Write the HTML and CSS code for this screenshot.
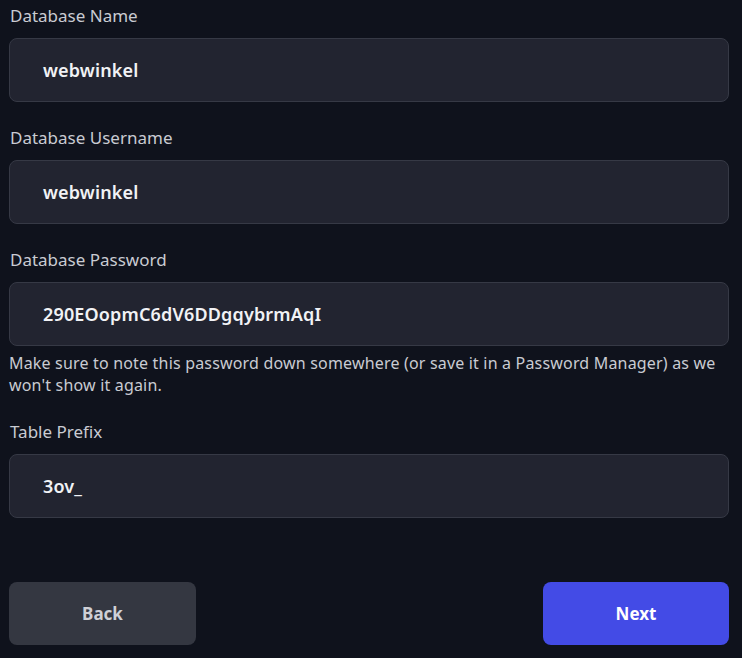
FILE: index.html
```html
<!DOCTYPE html>
<html>
<head>
<meta charset="utf-8">
<link rel="stylesheet" href="styles.css">
</head>
<body>
<div class="form">
  <div class="field">
    <label class="label">Database Name</label>
    <div class="input">webwinkel</div>
  </div>
  <div class="field">
    <label class="label">Database Username</label>
    <div class="input">webwinkel</div>
  </div>
  <div class="field">
    <label class="label">Database Password</label>
    <div class="input">290EOopmC6dV6DDgqybrmAqI</div>
    <p class="help">Make sure to note this password down somewhere (or save it in a Password Manager) as we won't show it again.</p>
  </div>
  <div class="field">
    <label class="label">Table Prefix</label>
    <div class="input">3ov_</div>
  </div>
  <div class="actions">
    <button class="btn btn-back">Back</button>
    <button class="btn btn-next">Next</button>
  </div>
</div>
</body>
</html>
```
FILE: styles.css
```css
html, body {
  margin: 0;
  padding: 0;
  background: #0f121c;
  font-family: "Noto Sans", "Open Sans", sans-serif;
}
.form {
  padding: 4px 13px 0 9px;
  display: flex;
  flex-direction: column;
  gap: 24px;
}
.field {
  display: flex;
  flex-direction: column;
}
.label {
  font-size: 17px;
  line-height: 24px;
  color: #c9cbd2;
  margin-bottom: 10px;
  padding-left: 1px;
}
.input {
  height: 62px;
  border: 1px solid #363945;
  border-radius: 8px;
  background: #222430;
  color: #f1f2f5;
  font-size: 18px;
  font-weight: 600;
  letter-spacing: 0.15px;
  line-height: 62px;
  padding-left: 33px;
}
.help {
  margin: 6px 0 0;
  font-size: 16px;
  letter-spacing: 0.18px;
  line-height: 22px;
  color: #c9cbd2;
}
.actions {
  display: flex;
  justify-content: space-between;
  margin-top: 40px;
}
.btn {
  width: 187px;
  height: 63px;
  border: none;
  border-radius: 8px;
  font-family: "Noto Sans", "Open Sans", sans-serif;
  font-size: 17px;
  font-weight: 700;
  cursor: pointer;
}
.btn-back {
  background: #343741;
  color: #cfd0d6;
}
.btn-next {
  width: 186px;
  background: #434be6;
  color: #ffffff;
}
```
